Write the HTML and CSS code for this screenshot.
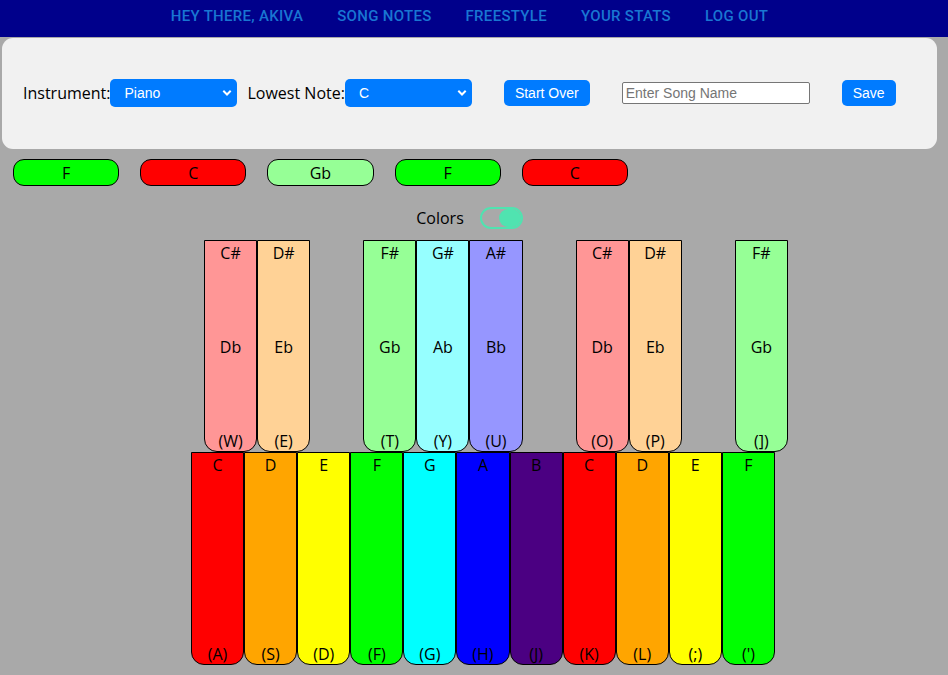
FILE: index.html
```html
<!DOCTYPE html>
<html lang="en">
<head>
<meta charset="utf-8">
<title>Freestyle</title>
<link rel="stylesheet" href="styles.css">
</head>
<body>
<nav class="nav">
  <a href="#">HEY THERE, AKIVA</a>
  <a href="#">SONG NOTES</a>
  <a href="#">FREESTYLE</a>
  <a href="#">YOUR STATS</a>
  <a href="#">LOG OUT</a>
</nav>
<main>
  <form class="panel">
    <div class="fields">
      <div class="field">
        <label for="instrument">Instrument:</label>
        <select id="instrument"><option>Piano</option></select>
      </div>
      <div class="field">
        <label for="lowest">Lowest Note:</label>
        <select id="lowest"><option>C</option></select>
      </div>
    </div>
    <button type="button">Start Over</button>
    <input class="song" type="text" placeholder="Enter Song Name" aria-label="Song name">
    <button type="button">Save</button>
  </form>
  <div class="played">
    <span class="note f">F</span>
    <span class="note c">C</span>
    <span class="note fs">Gb</span>
    <span class="note f">F</span>
    <span class="note c">C</span>
  </div>
  <div class="colors">
    <label for="colors">Colors</label>
    <input class="toggle" id="colors" type="checkbox" checked>
  </div>
  <div class="piano">
    <div class="row sharps">
      <button class="key cs"><span>C#</span><span>Db</span><span>(W)</span></button>
      <button class="key ds"><span>D#</span><span>Eb</span><span>(E)</span></button>
      <span></span>
      <button class="key fs"><span>F#</span><span>Gb</span><span>(T)</span></button>
      <button class="key gs"><span>G#</span><span>Ab</span><span>(Y)</span></button>
      <button class="key as"><span>A#</span><span>Bb</span><span>(U)</span></button>
      <span></span>
      <button class="key cs"><span>C#</span><span>Db</span><span>(O)</span></button>
      <button class="key ds"><span>D#</span><span>Eb</span><span>(P)</span></button>
      <span></span>
      <button class="key fs"><span>F#</span><span>Gb</span><span>(])</span></button>
    </div>
    <div class="row">
      <button class="key c"><span>C</span><span>(A)</span></button>
      <button class="key d"><span>D</span><span>(S)</span></button>
      <button class="key e"><span>E</span><span>(D)</span></button>
      <button class="key f"><span>F</span><span>(F)</span></button>
      <button class="key g"><span>G</span><span>(G)</span></button>
      <button class="key a"><span>A</span><span>(H)</span></button>
      <button class="key b"><span>B</span><span>(J)</span></button>
      <button class="key c"><span>C</span><span>(K)</span></button>
      <button class="key d"><span>D</span><span>(L)</span></button>
      <button class="key e"><span>E</span><span>(;)</span></button>
      <button class="key f"><span>F</span><span>(')</span></button>
    </div>
  </div>
</main>
</body>
</html>
```

FILE: styles.css
```css
* {
  box-sizing: border-box;
}

body {
  margin: 0;
  background: #a9a9a9;
  color: #000;
  font: 400 16px/24px "Segoe UI", "Open Sans", "Noto Sans", sans-serif;
}

.nav {
  display: flex;
  justify-content: center;
  gap: 34px;
  padding: 4px 9px 9px 0;
  background: #00008b;
}

.nav a {
  color: #1976d2;
  font: 500 15px/24px Roboto, sans-serif;
  letter-spacing: 0.02em;
  text-decoration: none;
}

.panel {
  display: flex;
  align-items: center;
  gap: 32px;
  margin: 1px 11px 0 2px;
  padding: 41px 21px 42px;
  border-radius: 11px;
  background: #f1f1f1;
}

.fields {
  display: flex;
  gap: 10px;
}

.field {
  display: flex;
  align-items: center;
}

select,
.panel button {
  border: 0;
  border-radius: 5px;
  background: #007bff;
  color: #fff;
  font: 14px/16px "Liberation Sans", Arial, sans-serif;
}

select {
  appearance: none;
  width: 127px;
  height: 28px;
  padding: 0 18px 0 14px;
  background: #007bff url("data:image/svg+xml,%3Csvg xmlns='http://www.w3.org/2000/svg' width='10' height='8'%3E%3Cpath d='M1.3 1.8L5 5.5L8.7 1.8' fill='none' stroke='white' stroke-width='2'/%3E%3C/svg%3E") no-repeat right 5px center;
}

.panel button {
  padding: 5px 11px;
}

.song {
  width: 188px;
  height: 22px;
  padding: 0 3px;
  border: 1px solid #767676;
  border-radius: 2px;
  font: 14px/16px "Liberation Sans", Arial, sans-serif;
}

.played {
  display: flex;
  gap: 21px;
  padding: 10px 13px;
}

.note {
  width: 11.2vw;
  padding-top: 1px;
  border: 1px solid #000;
  border-radius: 11px;
  line-height: 24px;
  text-align: center;
}

.colors {
  display: flex;
  justify-content: center;
  align-items: center;
  gap: 16px;
  margin-top: 10px;
  padding-right: 9px;
}

.toggle {
  display: flex;
  justify-content: flex-end;
  appearance: none;
  width: 43px;
  height: 22px;
  margin: 0;
  border: 2px solid #50e3b0;
  border-radius: 11px;
}

.toggle::before {
  content: "";
  width: 22px;
  border-radius: 9px;
  background: #50e3b0;
}

.toggle:not(:checked) {
  justify-content: flex-start;
}

.piano {
  width: 61.6vw;
  margin: 10px 0 10px 191px;
}

.row {
  display: grid;
  grid-template-columns: repeat(11, 1fr);
}

.sharps {
  margin: 0 -13px 0 13px;
}

.key {
  display: flex;
  flex-direction: column;
  justify-content: space-between;
  align-items: center;
  height: 22.4vw;
  padding: 2px 0 0;
  border: 1px solid #000;
  border-radius: 0 0 13px 13px;
  color: #000;
  font: inherit;
  line-height: 20px;
}

.c { background: #f00; }
.d { background: #ffa500; }
.e { background: #ff0; }
.f { background: #0f0; }
.g { background: #0ff; }
.a { background: #00f; }
.b { background: #4b0082; }
.cs { background: #ff9696; }
.ds { background: #ffd296; }
.fs { background: #96ff96; }
.gs { background: #96ffff; }
.as { background: #9696ff; }
```
